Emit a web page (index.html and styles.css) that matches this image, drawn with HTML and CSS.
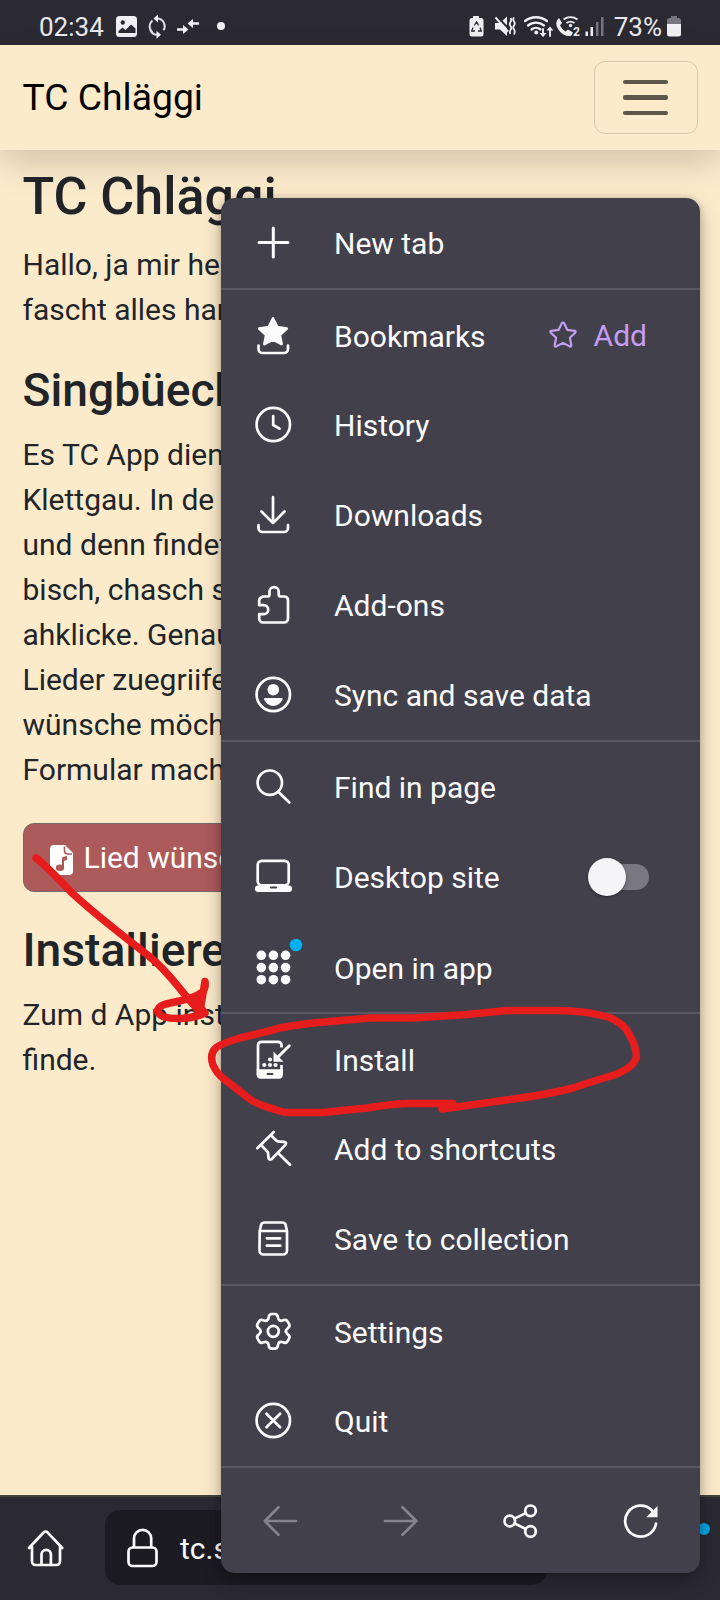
FILE: index.html
```html
<!DOCTYPE html>
<html lang="de">
<head>
<meta charset="utf-8">
<title>TC Chläggi</title>
<link rel="stylesheet" href="styles.css">
</head>
<body>
<div class="screen">
  <header class="status">
    <span class="status-text">02:34</span>
    <svg class="status-left" width="112" height="26" viewBox="0 0 112 26">
      <rect x="2" y="3" width="21" height="21" rx="3.500" fill="#f0eff4"/>
      <circle cx="8.800" cy="9.500" r="2.200" fill="#2b2a33"/>
      <path d="M4.500 20v-2l4-3.500 3 2.500 5.500-5.500 4.500 4V20z" fill="#2b2a33"/>
      <path d="M38.500 19.500a7.800 7.800 0 0 1 0-12M44 5.500a7.800 7.800 0 0 1 5.500 11.800M36.300 17a7.800 7.800 0 0 0 7 4.800" fill="none" stroke="#dddce2" stroke-width="2"/>
      <path d="M44 1.500v8l-4.500-4zM42.500 17.800v8l4.500-4z" fill="#f0eff4"/>
      <path d="M63 16.500h8M85 10.500h-8" stroke="#f0eff4" stroke-width="2.400"/>
      <path d="M69 12l5.500 4.500L69 21zM79 6l-5.500 4.500L79 15z" fill="#f0eff4"/>
      <circle cx="107" cy="13" r="4" fill="#f0eff4"/>
    </svg>
    <svg class="status-right" width="140" height="26" viewBox="0 0 140 26">
      <path d="M5 3V1h6v2h2a2.500 2.500 0 0 1 2.500 2.500V19a2.500 2.500 0 0 1-2.500 2.500H4A2.500 2.500 0 0 1 1.500 19V5.500A2.500 2.500 0 0 1 4 3z" fill="#f0eff4"/>
      <path d="M6.300 10.500l2.200-3.500 2.200 3.500M12 12.500l1.300 3.500H10M7 16H3.700L5 12.500" fill="none" stroke="#2b2a33" stroke-width="1.300"/>
      <path d="M27 8h5l7-6.500V21l-7-6.500h-5z" fill="#f0eff4"/>
      <path d="M29 1.500L41 14" stroke="#2b2a33" stroke-width="2"/>
      <path d="M27.500 2.500l12.500 14" stroke="#f0eff4" stroke-width="1.900"/>
      <path d="M42.500 3q1.500 2 0 4t0 4 0 4 0 4M46 2.500q-1.500 2 0 4t0 4 0 4 0 5" fill="none" stroke="#f0eff4" stroke-width="1.800"/>
      <g fill="none" stroke="#f0eff4" stroke-width="2.300" stroke-linecap="round">
        <path d="M57 6a18 18 0 0 1 22 0M60 10.500a12.500 12.500 0 0 1 16 0M63.500 14.500a7 7 0 0 1 9 0"/>
        <path d="M75 14v6.500M82 21v-6" stroke-width="1.900"/>
      </g>
      <circle cx="68.300" cy="17.500" r="2" fill="#f0eff4"/>
      <path d="M71.500 18h7L75 22zM78.500 15.500h7L82 11.500z" fill="#f0eff4"/>
      <path d="M91 3l3 5-2 2.500q2 4 5.500 6l2.500-2 5 3-2 3.500q-8 1-13-7-4-7 1-11z" fill="#f0eff4"/>
      <path d="M95.500 4.500a12 12 0 0 1 14 0M98.500 8a7 7 0 0 1 8 0" fill="none" stroke="#f0eff4" stroke-width="1.900"/>
      <circle cx="102.500" cy="10.500" r="1.700" fill="#f0eff4"/>
      <text x="105" y="20.500" class="sim">2</text>
      <g fill="#f0eff4"><rect x="117.500" y="16.500" width="2.500" height="4.500"/><rect x="122.500" y="12" width="2.500" height="9"/></g>
      <g fill="#77757e"><rect x="128" y="7" width="2.500" height="14"/><rect x="133" y="2" width="2.500" height="19"/></g>
    </svg>
    <span class="status-text status-pct">73%</span>
    <svg class="battery" width="14" height="22" viewBox="0 0 14 22">
      <path d="M0 8V4.500A2.500 2.500 0 0 1 2.500 2H4V0h6v2h1.500A2.500 2.500 0 0 1 14 4.500V8z" fill="#77757e"/>
      <path d="M0 8h14v10a2.500 2.500 0 0 1-2.500 2.500h-9A2.500 2.500 0 0 1 0 18z" fill="#f0eff4"/>
    </svg>
  </header>

  <nav class="navbar">
    <span class="brand">TC Chläggi</span>
    <span class="toggler"><i></i><i></i><i></i></span>
  </nav>

  <main class="page">
    <h1>TC Chläggi</h1>
    <p>Hallo, ja mir he<br>fascht alles han</p>
    <h2>Singbüech</h2>
    <p class="intro">Es TC App dient<br>Klettgau. In de<br>und denn findet<br>bisch, chasch s<br>ahklicke. Genau<br>Lieder zuegriife<br>wünsche möcht<br>Formular mache</p>
    <div class="wish">
      <svg width="23" height="30" viewBox="0 0 23 30"><path d="M4 0h11l8 8v18a4 4 0 0 1-4 4H4a4 4 0 0 1-4-4V4a4 4 0 0 1 4-4z" fill="#fff"/><path d="M14.500 1.500V6a3 3 0 0 0 3 3H22" fill="none" stroke="#ad5a5b" stroke-width="1.600"/><path d="M12 22V12.500l5-1.800v4.300l-3 1V22" fill="#ad5a5b"/><ellipse cx="10" cy="22.800" rx="4.200" ry="3.300" fill="#ad5a5b"/></svg>
      <span>Lied wünsche</span>
    </div>
    <h2>Installiere</h2>
    <p>Zum d App insta<br>finde.</p>
  </main>

  <footer class="bottombar">
    <svg class="home" width="40" height="40" viewBox="0 0 40 40"><path d="M3 20L17.800 4.300a2.500 2.500 0 0 1 3.700 0L36.300 20M6 18V33.500a3.500 3.500 0 0 0 3.500 3.500h21a3.500 3.500 0 0 0 3.500-3.500V18M15.500 36.500V26.500a4.700 4.700 0 0 1 9.400 0v10"/></svg>
    <div class="url">
      <svg width="32" height="40" viewBox="0 0 32 40"><rect x="1.500" y="19.500" width="28" height="18.500" rx="4"/><path d="M7 19v-8.500a8.600 8.600 0 0 1 17.200 0V19"/></svg>
      <span>tc.s</span>
    </div>
    <span class="update-dot"></span>
  </footer>

  <div class="menu">
    <section>
      <div class="row"><svg class="icon" viewBox="0 0 40 40"><path d="M20.300 5v29M6 19.500h29" stroke-width="3"/></svg><span>New tab</span></div>
    </section>
    <section>
      <div class="row low"><svg class="icon" viewBox="0 0 40 40"><path class="solid" d="M20 3.500l4.300 8.700 9.500 1.300-7 6.600 1.800 8.900L20 24.500 11.400 29l1.800-8.900-7-6.600 9.500-1.300z"/><path d="M5.500 30.500v3.500a4 4 0 0 0 4 4h21.500a4 4 0 0 0 4-4v-3.500"/></svg><span>Bookmarks</span>
        <span class="add"><svg width="30" height="30" viewBox="0 0 30 30"><path d="M15 2.500q.8 0 1.200.8l3.100 6.600 7.300 1q1.800.5.600 1.900l-5.300 5 1.400 7.400q0 1.800-1.700 1.200L15 22.900l-6.600 3.500q-1.700.6-1.700-1.200l1.400-7.400-5.300-5q-1.200-1.400.6-1.900l7.300-1 3.100-6.600q.4-.8 1.200-.8z"/></svg>Add</span></div>
      <div class="row"><svg class="icon" viewBox="0 0 40 40"><circle cx="20.300" cy="19.500" r="16.700"/><path d="M20.200 11v9l6.300 3.700"/></svg><span>History</span></div>
      <div class="row"><svg class="icon" viewBox="0 0 40 40"><path d="M20 2v26M8.500 16.500L20 28l11.500-11.500M5.500 30v3a4 4 0 0 0 4 4h21.500a4 4 0 0 0 4-4v-3"/></svg><span>Downloads</span></div>
      <div class="row"><svg class="icon" viewBox="0 0 40 40"><path d="M9.500 11.500h5q2 0 2-2V6.800a4.600 4.600 0 0 1 9.200 0v2.700q0 2 2 2H31.500a3.800 3.800 0 0 1 3.500 3.800v18.400a3.800 3.800 0 0 1-3.800 3.800H10a3.800 3.800 0 0 1-3.800-3.800v-4.500h4.500a4.500 4.500 0 0 0 0-9h-4.500v-4.700a3.800 3.800 0 0 1 3.300-3.500z"/></svg><span>Add-ons</span></div>
      <div class="row"><svg class="icon" viewBox="0 0 40 40"><circle cx="20.300" cy="19.500" r="16.700"/><circle class="fill" cx="20.300" cy="14.700" r="5.800"/><path class="fill" d="M12 23h16.700q1.500 0 .8 1.500Q26.500 31 20.300 31t-9.200-6.500Q10.500 23 12 23z"/></svg><span>Sync and save data</span></div>
    </section>
    <section>
      <div class="row"><svg class="icon" viewBox="0 0 40 40"><circle cx="16.800" cy="15.700" r="12.200"/><path d="M26 25.500l10.300 10"/></svg><span>Find in page</span></div>
      <div class="row"><svg class="icon" viewBox="0 0 40 40"><rect x="4.700" y="3.800" width="31" height="24.500" rx="4"/><rect class="fill" x="2" y="28.500" width="37" height="6.500" rx="3"/><path d="M18 30.500h5" stroke="#42404b" stroke-width="2"/></svg><span>Desktop site</span><span class="switch"></span></div>
      <div class="row low"><svg class="icon" viewBox="0 0 40 40"><g class="fill"><circle cx="8.300" cy="8.300" r="4.800"/><circle cx="20.400" cy="8.300" r="4.800"/><circle cx="32.600" cy="8.300" r="4.800"/><circle cx="8.300" cy="20.600" r="4.800"/><circle cx="20.400" cy="20.600" r="4.800"/><circle cx="32.600" cy="20.600" r="4.800"/><circle cx="8.300" cy="32.700" r="4.800"/><circle cx="20.400" cy="32.700" r="4.800"/><circle cx="32.600" cy="32.700" r="4.800"/></g><circle cx="43" cy="-2" r="6.300" fill="#00b0f2" stroke="none"/></svg><span>Open in app</span></div>
    </section>
    <section>
      <div class="row low"><svg class="icon" viewBox="0 0 40 40"><path d="M28.500 8.500V6.300a3.500 3.500 0 0 0-3.500-3.500H8.500A3.500 3.500 0 0 0 5 6.300V36M28.500 26v10" stroke-linecap="butt"/><path class="fill" d="M3.700 30.200h26.100v5.500a4 4 0 0 1-4 4H7.700a4 4 0 0 1-4-4z"/><path d="M14.500 35h5" stroke="#42404b" stroke-width="2"/><g class="fill"><circle cx="11.300" cy="26" r="2.100"/><circle cx="17" cy="26" r="2.100"/><circle cx="22.500" cy="26" r="2.100"/><circle cx="17" cy="20.500" r="2.100"/><path d="M20.500 12.500v10.300h10z"/></g><path d="M25 18L36.300 6.800" stroke-width="3"/></svg><span>Install</span></div>
      <div class="row"><svg class="icon" viewBox="0 0 40 40"><path d="M4.300 19.300L20.800 3M18 6.200l5 5q1.300 1.300 3.200 1.400l5 .3q3 .5 1.200 3L19 29.800q-3 2-3.500-1l-.3-3.500q0-2-1.300-3.200L8.500 16.500M25.500 24.500l11.500 11.300"/></svg><span>Add to shortcuts</span></div>
      <div class="row"><svg class="icon" viewBox="0 0 40 40"><path d="M6.700 12l1.500-6.500Q9 3.500 11.500 3.500h17.700q2.500 0 3.300 2L34 12v19.500a4 4 0 0 1-4 4H10.500a4 4 0 0 1-4-4zM6.700 12H34"/><path d="M13.800 19.300h13.500M13.800 26.700h13.500"/></svg><span>Save to collection</span></div>
    </section>
    <section>
      <div class="row low"><svg class="icon" viewBox="0 0 40 40"><g transform="translate(20.300 20.300)"><path id="tooth" d="M-6.300-10.900Q-4.900-11.600-4.600-14-4.300-17.300-1.500-17.300H1.500Q4.300-17.300 4.600-14 4.900-11.600 6.300-10.900"/><use href="#tooth" transform="rotate(60)"/><use href="#tooth" transform="rotate(120)"/><use href="#tooth" transform="rotate(180)"/><use href="#tooth" transform="rotate(240)"/><use href="#tooth" transform="rotate(300)"/><circle r="5.500"/></g></svg><span>Settings</span></div>
      <div class="row"><svg class="icon" viewBox="0 0 40 40"><circle cx="20.300" cy="19.500" r="16.700"/><path d="M13.500 12.700l13.600 13.600M27.100 12.700L13.500 26.300"/></svg><span>Quit</span></div>
    </section>
    <div class="actions">
      <svg class="icon dim" viewBox="0 0 40 40"><path d="M35 20H4M17.500 6.200L3.800 20l13.700 13.800"/></svg>
      <svg class="icon dim" viewBox="0 0 40 40"><path d="M4 20H35.500M21.500 6.200L35.300 20 21.500 33.800"/></svg>
      <svg class="icon" viewBox="0 0 40 40"><circle cx="9.800" cy="20" r="5.300"/><circle cx="30.500" cy="9.800" r="5.300"/><circle cx="30.500" cy="30.500" r="5.300"/><path d="M14.500 17.600l11.300-5.500M14.500 22.400l11.300 5.600"/></svg>
      <svg class="icon" viewBox="0 0 40 40"><path d="M36 22.500A15.500 15.500 0 1 1 32 9.500"/><path class="fill" d="M37.500 5v11.200H26.200z"/></svg>
    </div>
  </div>

  <svg class="marker" viewBox="0 0 720 1600">
    <path d="M36 858C50 869 60 881 72 893C98 917 125 937 150 957C171 974 179 990 200 1012"/>
    <path d="M200 1011L205 981.500Q206 988 202.500 992C192 1000 178 1001 170 1003C155 1006 155 1013 163 1016.500C174 1020 192 1019 205 1013L195 1000"/>
    <path d="M442 1109L513 1099Q545 1095 573 1088 590 1082 611 1076 633 1069 636.500 1057 636 1045 629 1034 624 1023 608 1017 585 1010.500 557 1010.500H507L467 1014.500 413 1018H370L313 1023Q280 1027 273 1030L240 1038Q223 1043 217 1047 209 1053 213 1065 217 1074 224 1079L251 1100Q258 1105 285 1112.500H323L367 1108Q390 1104 407 1103.500H453L443 1108"/>
  </svg>
</div>
</body>
</html>
```
FILE: styles.css
```css
* { box-sizing: border-box; }
body { margin: 0; font-family: Roboto, "Liberation Sans", sans-serif; font-size: 30px; line-height: 45px; color: #212529; }
.screen { position: relative; width: 720px; height: 1600px; overflow: hidden; display: flex; flex-direction: column; background: #fcebcb; }

.status { flex: none; height: 45px; display: flex; align-items: center; padding: 8px 39px 0; background: #2b2a33; color: #e9e8ee; }
.status-text { font-size: 26px; line-height: 30px; }
.status-left { margin: 0 0 2px 10px; }
.status-right { margin: 2px 0 0 auto; }
.status-pct { margin-left: 6px; }
.battery { margin-left: 5px; }
.sim { font-size: 12px; font-weight: 700; fill: #f0eff4; }

.navbar { position: relative; flex: none; height: 105px; padding: 0 22px 0 22.500px; display: flex; align-items: center; justify-content: space-between; background: #fcebcb; box-shadow: 0 15px 30px rgba(0, 0, 0, .15); }
.brand { font-size: 37.300px; color: #000; }
.toggler { width: 104px; height: 73px; border: 1px solid #d8caae; border-radius: 11px; display: flex; flex-direction: column; align-items: center; justify-content: center; gap: 11px; padding-right: 1px; }
.toggler i { width: 45px; height: 4.300px; border-radius: 2px; background: #5c5749; }

.page { flex: 1; padding: 15px 22.500px 0; white-space: nowrap; overflow: hidden; }
h1, h2 { margin: 0 0 14px; font-weight: 500; }
h1 { font-size: 52px; line-height: 63px; }
h2 { font-size: 46.200px; line-height: 56px; }
p { margin: 0 0 30px; }
.intro { margin-bottom: 31px; }
.wish { width: 260px; height: 69px; margin-bottom: 30px; padding-left: 25px; display: flex; align-items: center; gap: 12px; border: 1.500px solid #75686a; border-radius: 11px; background: #ad5a5b; color: #fff; }
.wish svg { position: relative; top: 2px; left: 1px; }

.bottombar { position: relative; flex: none; height: 105px; display: flex; align-items: flex-start; padding: 13px 0 0 26px; border-top: 2px solid #454340; background: #2b2a33; color: #fbfbfe; }
.bottombar svg { fill: none; stroke: #fbfbfe; stroke-width: 2.700; stroke-linecap: round; stroke-linejoin: round; }
.home { margin-top: 18px; }
.url { width: 442px; height: 75px; margin-left: 39px; padding-left: 22px; display: flex; align-items: center; gap: 21px; border-radius: 15px; background: #1c1b22; }
.url span { padding-top: 1px; }
.update-dot { position: absolute; left: 698px; top: 25.500px; width: 12px; height: 12px; border-radius: 50%; background: #00a5e4; }

.menu { position: absolute; left: 221px; top: 198px; width: 479px; height: 1375px; border-radius: 14px; background: #42404b; color: #fbfbfe; box-shadow: 0 8px 20px rgba(0, 0, 0, .28), 0 0 6px rgba(0, 0, 0, .16); }
.menu section { border-bottom: 2px solid #5a5862; }
.row { height: 90px; display: flex; align-items: center; padding: 0 51px 0 32px; }
.row > span:nth-child(2) { margin-left: 41px; }
.low > span:nth-child(2) { padding-top: 2px; }
.icon { flex: none; width: 40px; height: 40px; overflow: visible; fill: none; stroke: #fbfbfe; stroke-width: 2.700; stroke-linecap: round; stroke-linejoin: round; }
.icon .fill { fill: #fbfbfe; stroke: none; }
.icon .solid { fill: #fbfbfe; }
.icon.dim { stroke: #85838c; }
.add { margin-left: auto; padding-right: 2px; display: flex; align-items: center; gap: 16px; color: #c59df3; }
.add svg { fill: none; stroke: #c59df3; stroke-width: 2.200; stroke-linejoin: round; }
.switch { margin-left: auto; width: 55px; height: 26px; border-radius: 13px; background: #79777f; display: flex; align-items: center; }
.switch::before { content: ""; flex: none; width: 38px; height: 38px; margin-left: -6px; border-radius: 50%; background: #f5f4f9; box-shadow: 0 1px 3px rgba(0, 0, 0, .4); }
.actions { height: 105px; display: flex; align-items: center; }
.actions .icon { margin: 0 39.875px; }

.marker { position: absolute; left: 0; top: 0; width: 720px; height: 1600px; fill: none; stroke: #e71c1c; stroke-width: 7.500; stroke-linecap: round; stroke-linejoin: round; pointer-events: none; }
```
